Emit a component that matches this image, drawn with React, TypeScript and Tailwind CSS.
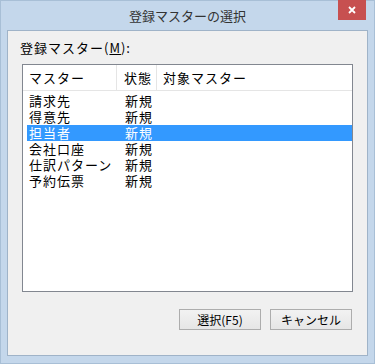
import React from 'react';

const rows = ['請求先', '得意先', '担当者', '会社口座', '仕訳パターン', '予約伝票'];

const App: React.FC = () => {
  const selected = 2;

  return (
    <div
      className="w-[375px] h-[364px] bg-[#c4d7eb] border border-[#a8bfd6] flex flex-col text-black"
      style={{ fontFamily: '"Noto Sans CJK JP", "Noto Sans", sans-serif' }}
    >
      {/* Title bar */}
      <div className="h-[29px] flex items-start justify-center relative shrink-0">
        <span className="mt-[6px] text-[13px] leading-[18px] text-[#333]">登録マスターの選択</span>
        <button className="absolute right-[8px] top-[-1px] w-[28px] h-[20px] bg-[#c75050] flex items-center justify-center">
          <svg width="10" height="10" viewBox="0 0 10 10">
            <path d="M2 2 L8 8 M8 2 L2 8" stroke="#fff" strokeWidth="1.8" />
          </svg>
        </button>
      </div>

      {/* Content */}
      <div className="mx-[6px] mb-[7px] flex-1 border border-[#9fb3c8] bg-[#f0f0f0] flex flex-col px-[14px]">
        <div className="mt-[9px] -ml-[2px] text-[13px] tracking-[1px] leading-[16px]">
          登録マスター(<span className="underline">M</span>):
        </div>

        {/* List view */}
        <div className="mt-[8px] h-[228px] bg-white border border-[#828790] flex flex-col">
          <div className="h-[26px] flex border-b border-[#e5e5e5] text-[13px] tracking-[1px] leading-[16px] items-stretch">
            <div className="w-[94px] pl-[6px] flex items-center border-r border-[#e5e5e5]">マスター</div>
            <div className="w-[40px] pl-[7px] flex items-center border-r border-[#e5e5e5]">状態</div>
            <div className="flex-1 pl-[6px] flex items-center">対象マスター</div>
          </div>
          <div className="pt-[2px] pl-[4px] flex flex-col">
            {rows.map((name, i) => (
              <div
                key={name}
                className={`h-[16px] flex text-[13px] tracking-[1px] leading-[16px] ${i === selected ? 'bg-[#3399ff] text-white' : ''}`}
              >
                <div className="w-[90px] pl-[2px] whitespace-nowrap">{name}</div>
                <div className="w-[40px] pl-[8px] whitespace-nowrap">新規</div>
                <div className="flex-1" />
              </div>
            ))}
          </div>
        </div>

        {/* Buttons */}
        <div className="mt-[17px] flex justify-end gap-[9px] pr-[1px]">
          <button className="w-[82px] h-[21px] border border-[#adadad] bg-gradient-to-b from-[#f2f2f2] to-[#e6e6e6] text-[12px] leading-[16px]">
            選択(F5)
          </button>
          <button className="w-[82px] h-[21px] border border-[#adadad] bg-gradient-to-b from-[#f2f2f2] to-[#e6e6e6] text-[12px] leading-[16px]">
            キャンセル
          </button>
        </div>
      </div>
    </div>
  );
};

export default App;
